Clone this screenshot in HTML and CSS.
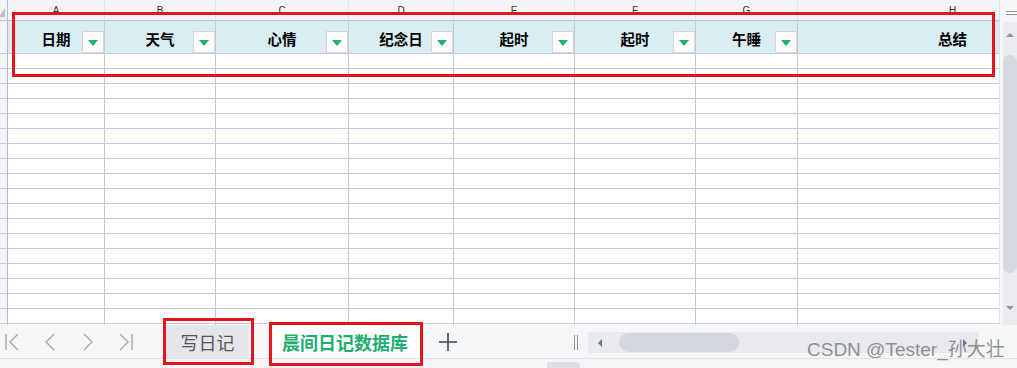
FILE: index.html
```html
<!DOCTYPE html>
<html lang="zh-CN">
<head>
  <meta charset="UTF-8" />
  <title>晨间日记数据库</title>
  <link rel="stylesheet" href="styles.css">
</head>
<body>
  <div class="app">
    <div class="main">
      <div class="grid-wrap">
        <div class="grid">
          <!-- 列标 -->
          <div class="cell rh corner"><span class="corner-tri"></span></div>
          <div class="cell colhead">A</div>
          <div class="cell colhead">B</div>
          <div class="cell colhead">C</div>
          <div class="cell colhead">D</div>
          <div class="cell colhead">E</div>
          <div class="cell colhead">F</div>
          <div class="cell colhead">G</div>
          <div class="cell colhead">H</div>

          <!-- 表头 + 筛选 -->
          <div class="cell rh"></div>
          <div class="cell head"><span></span><b>日期</b><i class="dd"></i></div>
          <div class="cell head"><span></span><b>天气</b><i class="dd"></i></div>
          <div class="cell head"><span></span><b>心情</b><i class="dd"></i></div>
          <div class="cell head"><span></span><b>纪念日</b><i class="dd"></i></div>
          <div class="cell head"><span></span><b>起时</b><i class="dd"></i></div>
          <div class="cell head"><span></span><b>起时</b><i class="dd"></i></div>
          <div class="cell head"><span></span><b>午睡</b><i class="dd"></i></div>
          <div class="cell head"><span></span><b>总结</b><span></span></div>

          <!-- 空白行 -->
          <div class="cell rh rows"></div>
          <div class="cell rows"></div>
          <div class="cell rows"></div>
          <div class="cell rows"></div>
          <div class="cell rows"></div>
          <div class="cell rows"></div>
          <div class="cell rows"></div>
          <div class="cell rows"></div>
          <div class="cell rows"></div>
        </div>
      </div>

      <div class="vscroll">
        <div class="vs-top"><span></span><span></span></div>
        <div class="vs-track">
          <div class="vs-arrow up"></div>
          <div class="vs-thumb"></div>
          <div class="vs-arrow down"></div>
        </div>
      </div>
    </div>

    <div class="tabbar">
      <div class="nav">
        <svg width="16" height="18" viewBox="0 0 16 18"><path d="M2 1v16M14 1L6 9l8 8" fill="none" stroke="#a7a7a7" stroke-width="1.4"/></svg>
        <svg width="16" height="18" viewBox="0 0 16 18"><path d="M12 1L4 9l8 8" fill="none" stroke="#a7a7a7" stroke-width="1.4"/></svg>
        <svg width="16" height="18" viewBox="0 0 16 18"><path d="M4 1l8 8-8 8" fill="none" stroke="#a7a7a7" stroke-width="1.4"/></svg>
        <svg width="16" height="18" viewBox="0 0 16 18"><path d="M2 1l8 8-8 8M14 1v16" fill="none" stroke="#a7a7a7" stroke-width="1.4"/></svg>
      </div>
      <div class="tab tab-write">写日记</div>
      <div class="tab active">晨间日记数据库</div>
      <div class="add">
        <svg width="20" height="20" viewBox="0 0 20 20"><path d="M10 1v18M1 10h18" stroke="#3f4657" stroke-width="1.6"/></svg>
      </div>
      <div class="split"></div>
      <div class="hscroll">
        <span class="hs-arrow left"></span>
        <span class="hs-thumb"></span>
        <span class="hs-fill"></span>
        <span class="hs-arrow right"></span>
      </div>
    </div>

    <div class="footer"><span class="pill"></span></div>

    <!-- 标注框 -->
    <div class="mark mark-head"></div>
    <div class="mark mark-tab1"></div>
    <div class="mark mark-tab2"></div>
    <div class="watermark">CSDN @Tester_孙大壮</div>
  </div>
</body>
</html>
```

FILE: styles.css
```css
body {
  margin: 0;
  background: #f5f6f8;
  font-family: "Noto Sans CJK SC", "Liberation Sans", sans-serif;
}
.app {
  position: relative;
  width: 1017px;
  height: 368px;
  overflow: hidden;
  display: flex;
  flex-direction: column;
}
.main {
  display: flex;
  height: 325px;
}
.grid-wrap {
  width: 999px;
  overflow: hidden;
  background: #fff;
  border-right: 1px solid #dfe2e8;
}
.grid {
  display: grid;
  grid-template-columns: 8px 97px 111px 133px 105px 121px 121px 102px 310px;
  grid-template-rows: 21px 33px 280px;
  width: 1108px;
}
.cell {
  box-sizing: border-box;
  border-right: 1px solid #c5cad9;
  border-bottom: 1px solid #c5cad9;
}
.rh {
  background: #f3f4f7;
  border-right-color: #b4bacb;
}
.corner {
  display: flex;
  align-items: flex-end;
  padding-bottom: 3px;
  border-bottom-color: #b9bfd0;
}
.corner-tri {
  width: 0;
  height: 0;
  border-left: 6px solid transparent;
  border-bottom: 9px solid #b9bdc7;
  margin-left: -1px;
}
.colhead {
  background: #f3f4f7;
  border-right-color: #e1e4ea;
  border-bottom-color: #b9bfd0;
  font-family: "Liberation Sans", sans-serif;
  font-size: 10px;
  color: #333;
  text-align: center;
  line-height: 22px;
}
.head {
  background: #daedf3;
  display: grid;
  grid-template-columns: 22px 1fr 22px;
  align-items: end;
}
.head b {
  align-self: center;
  text-align: center;
  font-size: 14.5px;
  font-weight: 700;
  color: #000;
  padding-top: 3px;
}
.dd {
  box-sizing: border-box;
  width: 22px;
  height: 22px;
  background: #fbfbfb;
  border: 1px solid #d4d6d8;
  display: flex;
  justify-content: center;
  align-items: center;
}
.dd::before {
  content: "";
  width: 0;
  height: 0;
  border-left: 5px solid transparent;
  border-right: 5px solid transparent;
  border-top: 6px solid #1fb26b;
  margin-top: 2px;
}
.rows {
  border-bottom: none;
  background: repeating-linear-gradient(to bottom, transparent 0, transparent 14px, #c5cad9 14px, #c5cad9 15px);
}
.rh.rows {
  background: #f3f4f7 repeating-linear-gradient(to bottom, transparent 0, transparent 14px, #c5cad9 14px, #c5cad9 15px);
}

/* 竖向滚动条 */
.vscroll {
  margin-left: 3px;
  width: 14px;
  display: flex;
  flex-direction: column;
}
.vs-top {
  height: 22px;
  display: flex;
  flex-direction: column;
  justify-content: center;
  gap: 2px;
  padding-left: 3px;
  padding-top: 4px;
  box-sizing: border-box;
}
.vs-top span {
  height: 1px;
  background: #8c92a2;
}
.vs-track {
  flex: 1;
  background: #eaecf0;
  display: flex;
  flex-direction: column;
  align-items: center;
}
.vs-arrow {
  width: 0;
  height: 0;
  border-left: 4px solid transparent;
  border-right: 4px solid transparent;
}
.vs-arrow.up {
  border-bottom: 4px solid #8e94a5;
  margin: 11px 0 18px;
}
.vs-arrow.down {
  border-top: 4px solid #8e94a5;
  margin-top: 33px;
}
.vs-thumb {
  width: 14px;
  height: 218px;
  background: #d6d9e0;
  border-radius: 7px;
}

/* 工作表标签栏 */
.tabbar {
  height: 34px;
  box-sizing: border-box;
  border-bottom: 1px solid #e0e2e6;
  display: flex;
  align-items: stretch;
}
.nav {
  display: flex;
  align-items: center;
  gap: 22px;
  padding-left: 4px;
}
.tab {
  display: flex;
  align-items: center;
  justify-content: center;
  font-size: 18px;
  color: #555;
}
.tab-write {
  margin-left: 32px;
  width: 83px;
  background: #e4e6eb;
}
.tab.active {
  margin-left: 21px;
  width: 150px;
  background: #fff;
  color: #1fae72;
  font-weight: 700;
}
.add {
  display: flex;
  align-items: center;
  margin-left: 18px;
}
.split {
  margin-left: 116px;
  margin-top: 10px;
  width: 2px;
  height: 15px;
  border-left: 1px solid #8a8f9a;
  border-right: 1px solid #8a8f9a;
}
.hscroll {
  margin-left: 10px;
  margin-top: 7px;
  width: 391px;
  height: 21px;
  background: #e8eaee;
  display: flex;
  align-items: center;
}
.hs-arrow {
  width: 0;
  height: 0;
  border-top: 4px solid transparent;
  border-bottom: 4px solid transparent;
}
.hs-arrow.left {
  border-right: 4px solid #6d7385;
  margin-left: 10px;
}
.hs-arrow.right {
  border-left: 4px solid #6d7385;
  margin-right: 12px;
}
.hs-thumb {
  margin-left: 17px;
  width: 120px;
  height: 19px;
  border-radius: 10px;
  background: #d4d7de;
}
.hs-fill {
  flex: 1;
}
.footer {
  flex: 1;
  display: flex;
  align-items: flex-end;
}
.pill {
  margin-left: 547px;
  width: 33px;
  height: 6px;
  border-radius: 3px 3px 0 0;
  background: #dcdfe4;
}

/* 红色标注框 */
.mark {
  position: absolute;
  border: 3px solid #e8141c;
  box-sizing: border-box;
}
.mark-head {
  left: 12px;
  top: 12px;
  width: 983px;
  height: 65px;
}
.mark-tab1 {
  left: 163px;
  top: 318px;
  width: 91px;
  height: 47px;
}
.mark-tab2 {
  left: 269px;
  top: 322px;
  width: 154px;
  height: 44px;
}
.watermark {
  position: absolute;
  left: 807px;
  top: 334px;
  font-family: "Liberation Sans", "Noto Sans CJK SC", sans-serif;
  font-size: 19px;
  color: rgba(110, 110, 110, 0.75);
}
```
